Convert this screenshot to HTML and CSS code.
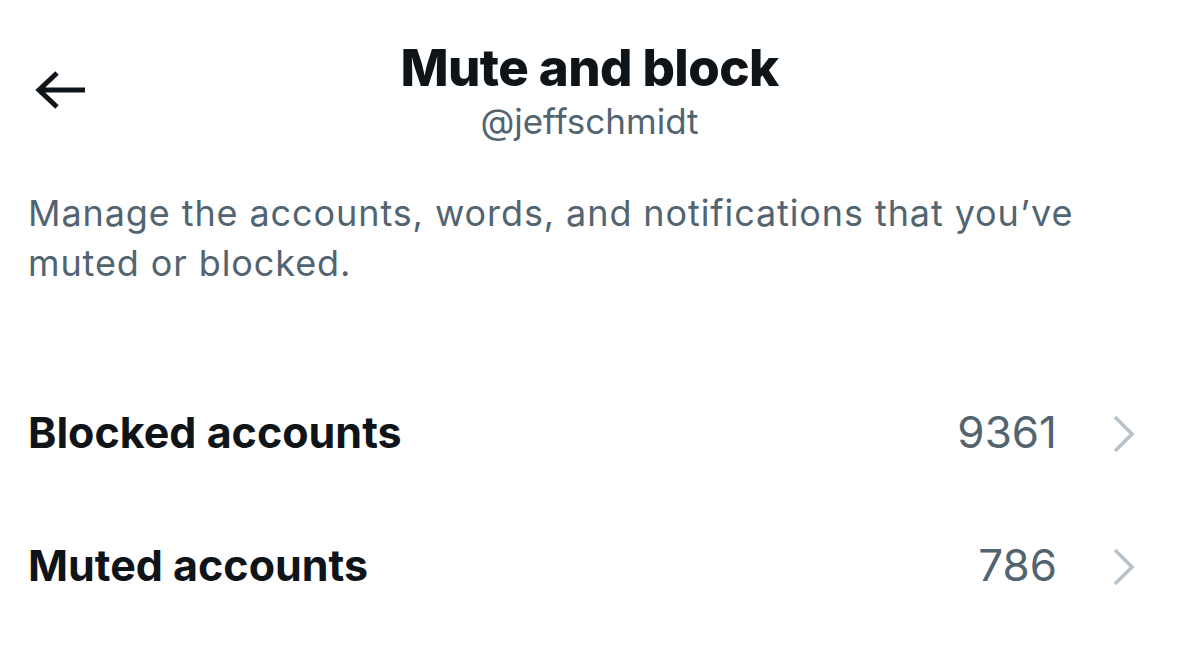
FILE: index.html
```html
<!DOCTYPE html>
<html>
<head>
<meta charset="utf-8">
<link rel="stylesheet" href="styles.css">
</head>
<body>
<div class="page">
  <header class="header">
    <div class="back">
      <svg width="56" height="40" viewBox="0 0 56 40"><path d="M52 20H6M24 3L6 20l18 17" fill="none" stroke="#0f1419" stroke-width="5" stroke-linecap="butt" stroke-linejoin="miter"/></svg>
    </div>
    <div class="titles">
      <div class="title">Mute and block</div>
      <div class="handle">@jeffschmidt</div>
    </div>
    <div class="spacer"></div>
  </header>
  <p class="desc">Manage the accounts, words, and notifications that you’ve muted or blocked.</p>
  <div class="list">
    <div class="row">
      <span class="label">Blocked accounts</span>
      <span class="count">9361</span>
      <svg class="chev" width="26" height="40" viewBox="0 0 26 40"><path d="M4 3l17 17L4 37" fill="none" stroke="#b7c2ca" stroke-width="3.6"/></svg>
    </div>
    <div class="row">
      <span class="label">Muted accounts</span>
      <span class="count">786</span>
      <svg class="chev" width="26" height="40" viewBox="0 0 26 40"><path d="M4 3l17 17L4 37" fill="none" stroke="#b7c2ca" stroke-width="3.6"/></svg>
    </div>
  </div>
</div>
</body>
</html>
```
FILE: styles.css
```css
html, body {
  margin: 0;
  padding: 0;
  background: #ffffff;
}
body {
  font-family: Inter, "Noto Sans", sans-serif;
  color: #0f1419;
}
.page {
  width: 1179px;
  height: 645px;
  overflow: hidden;
}
.header {
  display: grid;
  grid-template-columns: 120px 1fr 120px;
  align-items: start;
  padding-top: 40px;
}
.back {
  padding-left: 33px;
  padding-top: 30px;
}
.back svg { display: block; }
.titles {
  text-align: center;
}
.title {
  font-size: 51px;
  font-weight: 800;
  line-height: 56px;
  letter-spacing: -0.6px;
}
.handle {
  font-size: 35px;
  line-height: 42px;
  color: #536471;
  margin-top: 4px;
}
.desc {
  margin: 46px 28px 0 28px;
  font-size: 36px;
  line-height: 50px;
  letter-spacing: 0.9px;
  color: #536471;
}
.list {
  margin-top: 77px;
}
.row {
  display: flex;
  align-items: center;
  height: 133px;
  padding: 0 42px 0 28px;
}
.label {
  font-size: 43px;
  font-weight: 700;
  letter-spacing: 0;
  flex: 1;
}
.count {
  font-size: 44px;
  color: #536471;
  margin-right: 54px;
}
.chev { display: block; margin-top: 4px; }
```
